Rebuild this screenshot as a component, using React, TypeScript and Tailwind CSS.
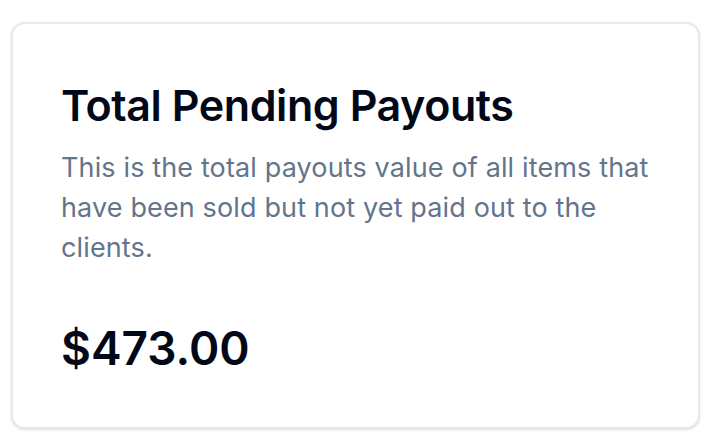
import React from 'react';

const App: React.FC = () => {
  return (
    <div className="min-h-screen bg-white pl-[11px] pr-[16px] pt-[22px] pb-[16px]" style={{ fontFamily: 'Inter, "Noto Sans", sans-serif' }}>
      <div className="w-[689px] h-[407px] rounded-[14px] border-2 border-[#e5e9f0] bg-white shadow-sm pl-[48px] pr-[36px] pt-[57px]">
        <h2 className="text-[43px] leading-[48px] font-semibold tracking-[-0.01em] text-[#020817]">Total Pending Payouts</h2>
        <p className="mt-[19px] text-[27px] leading-[40px] tracking-[0.005em] text-[#64748b]">
          This is the total payouts value of all items that have been sold but not yet paid out to the clients.
        </p>
        <div className="mt-[52px] text-[46px] leading-[56px] font-semibold text-[#020817]">$473.00</div>
      </div>
    </div>
  );
};

export default App;
